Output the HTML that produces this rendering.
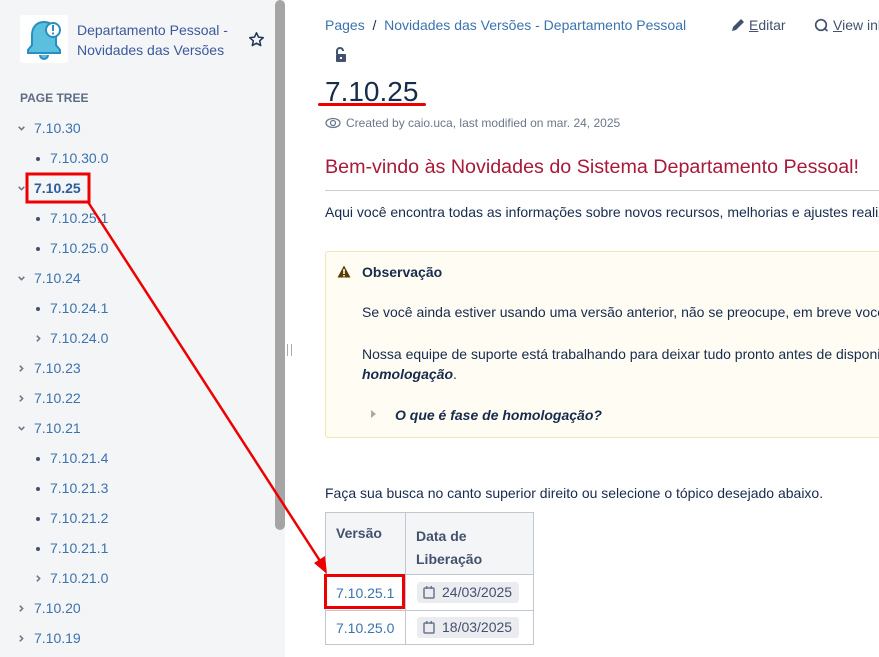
<!DOCTYPE html>
<html><head><meta charset="utf-8"><style>
*{margin:0;padding:0;box-sizing:border-box}
body{width:879px;height:657px;overflow:hidden;background:#fff;font-family:"Liberation Sans",sans-serif;position:relative;color:#172b4d}
.side{position:absolute;left:0;top:0;width:285px;height:657px;background:#f4f5f7}
.scroll{position:absolute;left:275px;top:0;width:10px;height:530px;background:#a5a5a5;border-radius:5px}
.logo{position:absolute;left:20px;top:15px;width:48px;height:48px;background:#fff;border-radius:3px}
.title{position:absolute;left:77px;top:20px;font-size:14px;line-height:20px;color:#3b5a9a}
.pt{position:absolute;left:20px;top:91px;font-size:12px;font-weight:bold;color:#5e6c84}
.it{position:absolute;font-size:14px;color:#3b73af}
.dn,.rt,.bu{position:absolute}
.bu{width:4px;height:4px;border-radius:50%;background:#42526e}
.main{position:absolute;left:325px}
a{color:#3b73af;text-decoration:none}
</style></head><body>
<svg width="0" height="0" style="position:absolute"><defs>
<symbol id="d" viewBox="0 0 8 8"><path d="M1.5 2.5L4 5L6.5 2.5" fill="none" stroke="#6b778c" stroke-width="1.4"/></symbol>
<symbol id="r" viewBox="0 0 8 8"><path d="M2.5 1.5L5 4L2.5 6.5" fill="none" stroke="#6b778c" stroke-width="1.4"/></symbol>
</defs></svg>
<div class="side">
<div class="logo"><svg width="48" height="48" viewBox="0 0 48 48"><path d="M24 7c-8 0-12 6-12 13v10l-4 5v3h32v-3l-4-5V20c0-7-4-13-12-13z" fill="#5bc0de" stroke="#2a8fc0" stroke-width="2"/><path d="M20 40a4 4 0 0 0 8 0" fill="#5bc0de" stroke="#2a8fc0" stroke-width="2"/><circle cx="33" cy="15" r="7" fill="#fff" stroke="#2a8fc0" stroke-width="2"/><rect x="32" y="10" width="2" height="6" fill="#2a8fc0"/><rect x="32" y="17.5" width="2" height="2" fill="#2a8fc0"/></svg></div>
<div class="title">Departamento Pessoal -<br>Novidades das Versões</div>
<svg style="position:absolute;left:248px;top:31px" width="17" height="17" viewBox="0 0 24 24"><path d="M12 2.5l2.9 6.2 6.6.7-5 4.5 1.4 6.6L12 17.2l-5.9 3.3 1.4-6.6-5-4.5 6.6-.7z" fill="none" stroke="#253858" stroke-width="2.2" stroke-linejoin="round"/></svg>
<div class="pt">PAGE TREE</div>
<svg class="dn" style="left:17px;top:124px" width="9" height="9"><use href="#d"/></svg><div class="it" style="left:34px;top:120px">7.10.30</div>
<div class="bu" style="left:36px;top:157px"></div><div class="it" style="left:50px;top:150px">7.10.30.0</div>
<svg class="dn" style="left:17px;top:184px" width="9" height="9"><use href="#d"/></svg><div class="it" style="left:34px;top:180px;font-weight:bold;color:#2b5e9a">7.10.25</div>
<div class="bu" style="left:36px;top:217px"></div><div class="it" style="left:50px;top:210px">7.10.25.1</div>
<div class="bu" style="left:36px;top:247px"></div><div class="it" style="left:50px;top:240px">7.10.25.0</div>
<svg class="dn" style="left:17px;top:274px" width="9" height="9"><use href="#d"/></svg><div class="it" style="left:34px;top:270px">7.10.24</div>
<div class="bu" style="left:36px;top:307px"></div><div class="it" style="left:50px;top:300px">7.10.24.1</div>
<svg class="rt" style="left:34px;top:334px" width="9" height="9"><use href="#r"/></svg><div class="it" style="left:50px;top:330px">7.10.24.0</div>
<svg class="rt" style="left:17px;top:364px" width="9" height="9"><use href="#r"/></svg><div class="it" style="left:34px;top:360px">7.10.23</div>
<svg class="rt" style="left:17px;top:394px" width="9" height="9"><use href="#r"/></svg><div class="it" style="left:34px;top:390px">7.10.22</div>
<svg class="dn" style="left:17px;top:424px" width="9" height="9"><use href="#d"/></svg><div class="it" style="left:34px;top:420px">7.10.21</div>
<div class="bu" style="left:36px;top:457px"></div><div class="it" style="left:50px;top:450px">7.10.21.4</div>
<div class="bu" style="left:36px;top:487px"></div><div class="it" style="left:50px;top:480px">7.10.21.3</div>
<div class="bu" style="left:36px;top:517px"></div><div class="it" style="left:50px;top:510px">7.10.21.2</div>
<div class="bu" style="left:36px;top:547px"></div><div class="it" style="left:50px;top:540px">7.10.21.1</div>
<svg class="rt" style="left:34px;top:574px" width="9" height="9"><use href="#r"/></svg><div class="it" style="left:50px;top:570px">7.10.21.0</div>
<svg class="rt" style="left:17px;top:604px" width="9" height="9"><use href="#r"/></svg><div class="it" style="left:34px;top:600px">7.10.20</div>
<svg class="rt" style="left:17px;top:634px" width="9" height="9"><use href="#r"/></svg><div class="it" style="left:34px;top:630px">7.10.19</div>
<div class="scroll"></div>
</div>
<div style="position:absolute;left:287px;top:344px;width:5px;height:12px;border-left:1px solid #aaa;border-right:1px solid #aaa"></div>

<div class="main" style="top:17px;font-size:14px;white-space:nowrap"><a>Pages</a> &nbsp;/&nbsp; <a>Novidades das Versões - Departamento Pessoal</a></div>
<svg style="position:absolute;left:731px;top:18px" width="14" height="14" viewBox="0 0 14 14"><path d="M1 13l1-4 8-8 3 3-8 8z" fill="#42526e"/></svg>
<div style="position:absolute;left:749px;top:17px;font-size:14px;color:#42526e;white-space:nowrap"><u>E</u>ditar</div>
<svg style="position:absolute;left:814px;top:18px" width="15" height="15" viewBox="0 0 15 15"><circle cx="7" cy="7" r="5.3" fill="none" stroke="#42526e" stroke-width="1.7"/><path d="M10 10l3.5 3" stroke="#42526e" stroke-width="1.7"/></svg>
<div style="position:absolute;left:833px;top:17px;font-size:14px;color:#42526e;white-space:nowrap"><u>V</u>iew inl</div>
<svg style="position:absolute;left:334px;top:47px" width="14" height="16" viewBox="0 0 14 16"><path d="M3 7V4a3 3 0 0 1 6 0" fill="none" stroke="#42526e" stroke-width="2"/><rect x="2" y="7" width="10" height="8" rx="1" fill="#42526e"/><rect x="6" y="10" width="2" height="2" fill="#fff"/></svg>
<div class="main" style="top:76px;font-size:28px;color:#172b4d">7.10.25</div>
<div style="position:absolute;left:318px;top:103px;width:108px;height:3px;background:#e00;border-radius:2px"></div>
<svg style="position:absolute;left:325px;top:117px" width="16" height="12" viewBox="0 0 16 12"><ellipse cx="8" cy="6" rx="7" ry="4.5" fill="none" stroke="#6b778c" stroke-width="1.3"/><circle cx="8" cy="6" r="2.5" fill="none" stroke="#6b778c" stroke-width="1.3"/></svg>
<div style="position:absolute;left:346px;top:116px;font-size:12px;color:#6b778c">Created by caio.uca, last modified on mar. 24, 2025</div>
<div class="main" style="top:156px;font-size:19.7px;color:#a8193a;white-space:nowrap">Bem-vindo às Novidades do Sistema Departamento Pessoal!</div>
<div style="position:absolute;left:325px;top:190px;width:554px;height:1px;background:#ccc"></div>
<div class="main" style="top:204px;font-size:14px;white-space:nowrap">Aqui você encontra todas as informações sobre novos recursos, melhorias e ajustes realiz</div>
<div style="position:absolute;left:325px;top:251px;width:570px;height:187px;background:#fffcf4;border:1px solid #f3e6b4;border-radius:3px"></div>
<svg style="position:absolute;left:337px;top:265px" width="14" height="13" viewBox="0 0 14 13"><path d="M7 0.5L13.5 12.5H0.5Z" fill="#5a3c00"/><rect x="6.2" y="4" width="1.6" height="5" fill="#fffcf4"/><rect x="6.2" y="10" width="1.6" height="1.5" fill="#fffcf4"/></svg>
<div style="position:absolute;left:362px;top:264px;font-size:14px;font-weight:bold;white-space:nowrap">Observação</div>
<div style="position:absolute;left:362px;top:304px;font-size:14px;white-space:nowrap">Se você ainda estiver usando uma versão anterior, não se preocupe, em breve você</div>
<div style="position:absolute;left:362px;top:344px;font-size:14px;line-height:20px;white-space:nowrap">Nossa equipe de suporte está trabalhando para deixar tudo pronto antes de disponib<br><b><i>homologação</i></b>.</div>
<svg style="position:absolute;left:371px;top:410px" width="5" height="8"><path d="M0 0L5 4L0 8Z" fill="#aaa"/></svg>
<div style="position:absolute;left:395px;top:407px;font-size:14px;font-weight:bold;font-style:italic;white-space:nowrap">O que é fase de homologação?</div>
<div class="main" style="top:485px;font-size:14px;white-space:nowrap">Faça sua busca no canto superior direito ou selecione o tópico desejado abaixo.</div>
<div style="position:absolute;left:325px;top:512px;width:209px;height:133px;border:1px solid #c1c7d0">
<div style="position:absolute;left:0;top:0;width:207px;height:62px;background:#f4f5f7;border-bottom:1px solid #c1c7d0"></div>
<div style="position:absolute;left:79px;top:0;width:1px;height:131px;background:#c1c7d0"></div>
<div style="position:absolute;left:0;top:97px;width:207px;height:1px;background:#c1c7d0"></div>
<div style="position:absolute;left:10px;top:12px;font-size:14px;font-weight:bold;color:#42526e">Versão</div>
<div style="position:absolute;left:90px;top:12px;font-size:14px;font-weight:bold;color:#42526e;line-height:23px">Data de<br>Liberação</div>
<div style="position:absolute;left:10px;top:72px;font-size:14px;color:#3b73af">7.10.25.1</div>
<div style="position:absolute;left:10px;top:107px;font-size:14px;color:#3b73af">7.10.25.0</div>
<div style="position:absolute;left:91px;top:69px;width:102px;height:21px;background:#ebecf0;border-radius:3px;font-size:14px;color:#42526e;padding:2px 0 0 25px">24/03/2025</div>
<div style="position:absolute;left:91px;top:104px;width:102px;height:21px;background:#ebecf0;border-radius:3px;font-size:14px;color:#42526e;padding:2px 0 0 25px">18/03/2025</div>
<svg style="position:absolute;left:97px;top:73px" width="12" height="13"><rect x="1" y="2" width="10" height="10" rx="1" fill="none" stroke="#6b778c" stroke-width="1.5"/><rect x="3" y="0" width="1.5" height="3" fill="#6b778c"/><rect x="7.5" y="0" width="1.5" height="3" fill="#6b778c"/></svg>
<svg style="position:absolute;left:97px;top:108px" width="12" height="13"><rect x="1" y="2" width="10" height="10" rx="1" fill="none" stroke="#6b778c" stroke-width="1.5"/><rect x="3" y="0" width="1.5" height="3" fill="#6b778c"/><rect x="7.5" y="0" width="1.5" height="3" fill="#6b778c"/></svg>
</div>
<svg style="position:absolute;left:0;top:0" width="879" height="657">
<rect x="27" y="174" width="62" height="28" fill="none" stroke="#e00" stroke-width="3"/>
<rect x="325.5" y="575.5" width="78" height="32" fill="none" stroke="#e00" stroke-width="3"/>
<line x1="88" y1="202" x2="322" y2="564" stroke="#e00" stroke-width="2.5"/>
<path d="M327 574 L314 563 L325 556 Z" fill="#e00"/>
</svg>
</body></html>
